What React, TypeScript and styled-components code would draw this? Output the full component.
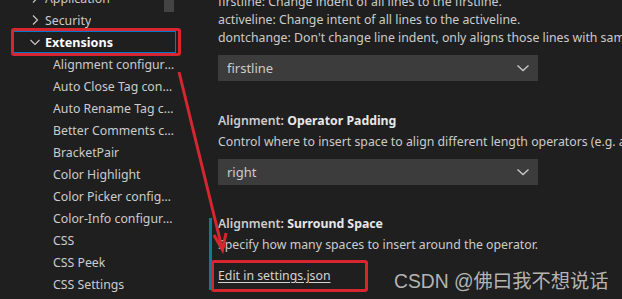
import React from 'react';
import styled, { createGlobalStyle } from 'styled-components';

const Global = createGlobalStyle`
  html, body { margin: 0; padding: 0; background: #1f1f1f; }
  body {
    width: 622px; height: 299px; overflow: hidden;
    font-family: "Noto Sans", "Open Sans", sans-serif;
  }
`;

const Page = styled.div`
  position: relative;
  width: 622px;
  height: 299px;
  overflow: hidden;
  display: flex;
  background: #1f1f1f;
  color: #cccccc;
  font-size: 12.3px;
`;

const Sidebar = styled.nav`
  position: relative;
  flex: none;
  width: 176px;
  padding-left: 13px;
  box-sizing: border-box;
`;

const TreeList = styled.ul`
  list-style: none;
  margin: -13px 0 0 0;
  padding: 0;
`;

const TreeRow = styled.li<{ $level: number; $selected?: boolean }>`
  height: 22px;
  box-sizing: border-box;
  display: flex;
  align-items: center;
  padding-left: ${(p) => (p.$level === 0 ? 15 : 39)}px;
  padding-right: 0;
  border: 1px solid ${(p) => (p.$selected ? '#0078d4' : 'transparent')};
  color: ${(p) => (p.$selected ? '#ffffff' : '#cccccc')};
  font-weight: ${(p) => (p.$selected ? 700 : 400)};
  font-size: ${(p) => (p.$selected ? 12.6 : 12.3)}px;
  white-space: nowrap;
`;

const Twisty = styled.span`
  width: 16px;
  flex: none;
  display: flex;
  align-items: center;
  color: #cccccc;
`;

const Label = styled.span`
  overflow: hidden;
  text-overflow: ellipsis;
  white-space: nowrap;
`;

const ScrollThumb = styled.div`
  position: absolute;
  top: 0;
  right: 2px;
  width: 10px;
  height: 12px;
  background: #434343;
`;

const Main = styled.main`
  flex: 1;
  padding-left: 33px;
  margin-top: -7px;
  display: flex;
  flex-direction: column;
`;

const Setting = styled.section<{ $modified?: boolean; $gap?: number }>`
  position: relative;
  padding-left: 9px;
  margin-top: ${(p) => p.$gap ?? 0}px;
  display: flex;
  flex-direction: column;
  &::before {
    content: '';
    display: ${(p) => (p.$modified ? 'block' : 'none')};
    position: absolute;
    left: 0;
    top: 3px;
    width: 3px;
    height: 72px;
    background: #127a96;
  }
`;

const Title = styled.div`
  line-height: 18px;
  font-weight: 600;
  color: #cccccc;
  white-space: nowrap;
  & b {
    font-weight: 700;
    color: #e7e7e7;
  }
`;

const Desc = styled.div<{ $mt?: number }>`
  line-height: 18px;
  margin-top: ${(p) => p.$mt ?? 0}px;
  white-space: nowrap;
  color: #cccccc;
`;

const Select = styled.div`
  margin-top: 8px;
  width: 320px;
  height: 26px;
  box-sizing: border-box;
  background: #3c3c3c;
  display: flex;
  align-items: center;
  justify-content: space-between;
  padding: 0 8px 0 9px;
  color: #cccccc;
  font-size: 13px;
`;

const Link = styled.a`
  margin-top: 13px;
  line-height: 18px;
  color: #d4d4d4;
  text-decoration: underline;
  text-underline-offset: 2px;
  white-space: nowrap;
  align-self: flex-start;
`;

const Overlay = styled.svg`
  position: absolute;
  left: 0;
  top: 0;
  pointer-events: none;
`;

const Watermark = styled.div`
  position: absolute;
  left: 394px;
  top: 269px;
  font-family: "Liberation Sans", "Noto Sans CJK SC", sans-serif;
  font-size: 19.3px;
  line-height: 26px;
  color: #b4b4b4;
  white-space: nowrap;
  pointer-events: none;
`;

const Chevron = ({ dir }: { dir: 'right' | 'down' }) => (
  <svg width="12" height="12" viewBox="0 0 12 12">
    {dir === 'right' ? (
      <path d="M4 1.5 L8.5 6 L4 10.5" fill="none" stroke="#cccccc" strokeWidth="1.1" />
    ) : (
      <path d="M1.5 4 L6 8.5 L10.5 4" fill="none" stroke="#cccccc" strokeWidth="1.1" />
    )}
  </svg>
);

const SelectChevron = () => (
  <svg width="14" height="10" viewBox="0 0 14 10">
    <path d="M1.5 2.5 L7 7.5 L12.5 2.5" fill="none" stroke="#cccccc" strokeWidth="1.3" />
  </svg>
);

const tree: { label: string; level: number; twisty?: 'right' | 'down'; selected?: boolean }[] = [
  { label: 'Application', level: 0, twisty: 'right' },
  { label: 'Security', level: 0, twisty: 'right' },
  { label: 'Extensions', level: 0, twisty: 'down', selected: true },
  { label: 'Alignment configuration', level: 1 },
  { label: 'Auto Close Tag configuration', level: 1 },
  { label: 'Auto Rename Tag configuration', level: 1 },
  { label: 'Better Comments configuration', level: 1 },
  { label: 'BracketPair', level: 1 },
  { label: 'Color Highlight', level: 1 },
  { label: 'Color Picker configuration', level: 1 },
  { label: 'Color-Info configuration', level: 1 },
  { label: 'CSS', level: 1 },
  { label: 'CSS Peek', level: 1 },
  { label: 'CSS Settings', level: 1 },
];

export default function App() {
  return (
    <Page>
      <Global />
      <Sidebar>
        <TreeList>
          {tree.map((t) => (
            <TreeRow key={t.label} $level={t.level} $selected={t.selected}>
              {t.twisty && (
                <Twisty>
                  <Chevron dir={t.twisty} />
                </Twisty>
              )}
              <Label>{t.label}</Label>
            </TreeRow>
          ))}
        </TreeList>
        <ScrollThumb />
      </Sidebar>
      <Main>
        <Setting>
          <Desc>firstline: Change indent of all lines to the firstline.</Desc>
          <Desc>activeline: Change intent of all lines to the activeline.</Desc>
          <Desc>dontchange: Don't change line indent, only aligns those lines with same indentation.</Desc>
          <Select>
            <span>firstline</span>
            <SelectChevron />
          </Select>
        </Setting>
        <Setting $gap={31}>
          <Title>
            Alignment: <b>Operator Padding</b>
          </Title>
          <Desc $mt={3}>Control where to insert space to align different length operators (e.g. assignment).</Desc>
          <Select>
            <span>right</span>
            <SelectChevron />
          </Select>
        </Setting>
        <Setting $gap={30} $modified>
          <Title>
            Alignment: <b>Surround Space</b>
          </Title>
          <Desc $mt={3}>Specify how many spaces to insert around the operator.</Desc>
          <Link href="#">Edit in settings.json</Link>
        </Setting>
      </Main>
      <Overlay width="622" height="299" viewBox="0 0 622 299">
        <rect x="12.5" y="29.5" width="167" height="25" rx="1.5" fill="none" stroke="#d7262f" strokeWidth="3" />
        <rect x="212.5" y="261.5" width="154" height="29" rx="1.5" fill="none" stroke="#d7262f" strokeWidth="3" />
        <line x1="179" y1="72" x2="222" y2="248" stroke="#d7262f" strokeWidth="3" />
        <path d="M214 235 L222.5 250 L226 233" fill="none" stroke="#d7262f" strokeWidth="3" strokeLinejoin="miter" />
      </Overlay>
      <Watermark>CSDN @佛曰我不想说话</Watermark>
    </Page>
  );
}
